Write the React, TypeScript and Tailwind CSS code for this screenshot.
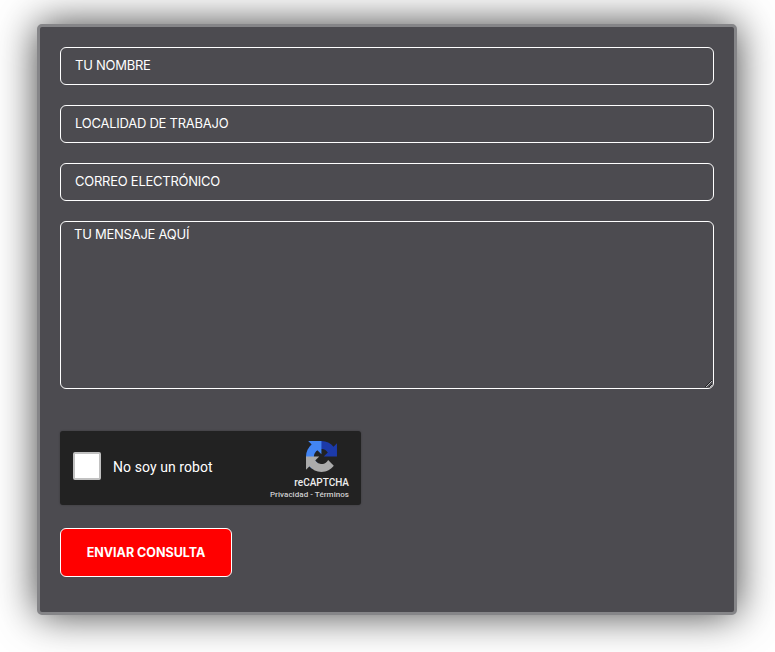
export default function App() {
  const field =
    "block w-full h-[38px] rounded-[6px] border border-white bg-transparent pl-[14px] pr-[14px] pb-[2px] text-[13px] text-white font-['Inter',sans-serif] tracking-[-0.25px] outline-none placeholder:text-white placeholder:opacity-100";
  return (
    <div className="min-h-[652px] bg-white pt-[24px] pl-[37px] overflow-hidden">
      <form className="w-[700px] h-[591px] rounded-[5px] border-[3px] border-[#858588] bg-[#4c4b50] pt-[20px] px-[20px] shadow-[0_0_40px_rgba(0,0,0,0.75)]">
        <div className="flex flex-col gap-[20px] w-[654px]">
          <input className={field} placeholder="TU NOMBRE" />
          <input className={field} placeholder="LOCALIDAD DE TRABAJO" />
          <input className={field} placeholder="CORREO ELECTRÓNICO" />
          <textarea
            className="block w-full h-[168px] rounded-[6px] border border-white bg-transparent px-[13px] py-[4px] text-[13px] leading-[17px] text-white font-['Inter',sans-serif] tracking-[-0.25px] outline-none placeholder:text-white placeholder:opacity-100"
            placeholder="TU MENSAJE AQUÍ"
          />
        </div>
        <div className="mt-[42px] w-[301px] h-[74px] rounded-[3px] bg-[#222222] flex items-start pl-[13px] pr-[12px] shadow-[0_0_2px_rgba(0,0,0,0.3)] font-['Roboto',sans-serif]">
          <div className="mt-[21px] w-[28px] h-[28px] rounded-[2px] border-2 border-[#c1c1c1] bg-white shrink-0" />
          <span className="mt-[26px] ml-[12px] text-[14px] leading-[20px] tracking-[0.07px] text-white">No soy un robot</span>
          <div className="ml-auto flex flex-col items-end pt-[10px]">
            <svg viewBox="0 0 64 64" className="w-[31px] h-[31px] mr-[12px]">
              <path d="M64 31.955l-.033-1.37V4.687l-7.16 7.16C50.948 4.674 42.033.093 32.05.093c-10.4 0-19.622 4.96-25.458 12.64l11.736 11.86a15.55 15.55 0 0 1 4.754-5.334c2.05-1.6 4.952-2.906 8.968-2.906.485 0 .86.057 1.135.163 4.976.393 9.288 3.14 11.828 7.124l-8.307 8.307 26.2-.004" fill="#1c3aa9" />
              <path d="M31.862.001l-1.37.033H4.594l7.16 7.16C4.58 13.053 0 21.968 0 31.95c0 10.4 4.96 19.622 12.64 25.458L24.5 45.672a15.55 15.55 0 0 1-5.334-4.754c-1.6-2.05-2.906-4.952-2.906-8.968 0-.485.057-.86.163-1.135.393-4.976 3.14-9.288 7.124-11.828l8.307 8.307-.004-26.2" fill="#4285f4" />
              <path d="M.001 31.955l.033 1.37v25.9l7.16-7.16c5.86 7.173 14.774 11.754 24.757 11.754 10.4 0 19.622-4.96 25.458-12.64l-11.736-11.86a15.55 15.55 0 0 1-4.754 5.334c-2.05 1.6-4.952 2.906-8.968 2.906-.485 0-.86-.057-1.135-.163-4.976-.393-9.288-3.14-11.828-7.124l8.307-8.307-26.2.004" fill="#ababab" />
            </svg>
            <span className="mt-[5px] text-[10px] leading-[12px] font-medium text-[#eeeeee]">reCAPTCHA</span>
            <span className="mt-[1px] text-[8px] leading-[10px] tracking-[0.05px] text-[#d0d0d0] font-medium">Privacidad - Términos</span>
          </div>
        </div>
        <button
          type="button"
          className="block mt-[23px] w-[172px] h-[49px] pt-[1px] rounded-[6px] border border-white bg-[#ff0000] text-[12.5px] font-bold text-white font-['Inter',sans-serif]"
        >
          ENVIAR CONSULTA
        </button>
      </form>
    </div>
  );
}
